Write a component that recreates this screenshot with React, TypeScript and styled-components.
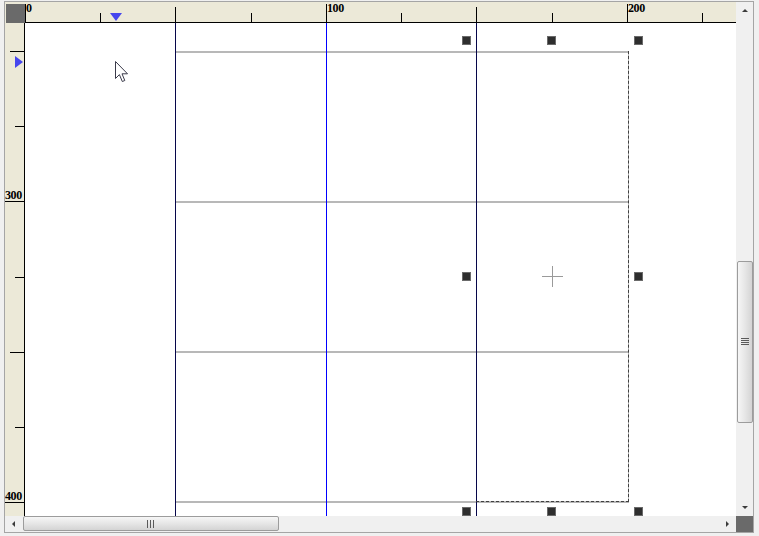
import React from "react";
import styled, { createGlobalStyle } from "styled-components";

type TickKind = "label" | "mid" | "minor";

interface Tick {
  at: number;
  kind: TickKind;
  label?: string;
}

const topTicks: Tick[] = [
  { at: 0, kind: "label", label: "0" },
  { at: 75, kind: "minor" },
  { at: 150, kind: "mid" },
  { at: 226, kind: "minor" },
  { at: 301, kind: "label", label: "100" },
  { at: 376, kind: "minor" },
  { at: 451, kind: "mid" },
  { at: 527, kind: "minor" },
  { at: 602, kind: "label", label: "200" },
  { at: 677, kind: "minor" },
];

const sideTicks: Tick[] = [
  { at: 28, kind: "mid" },
  { at: 103, kind: "minor" },
  { at: 178, kind: "label", label: "300" },
  { at: 254, kind: "minor" },
  { at: 329, kind: "mid" },
  { at: 404, kind: "minor" },
  { at: 479, kind: "label", label: "400" },
];

const guides = [
  { at: 150, color: "#06064a" },
  { at: 301, color: "#0000ff" },
  { at: 451, color: "#06064a" },
];

const handles = [
  [437, 13],
  [522, 13],
  [609, 13],
  [437, 249],
  [609, 249],
  [437, 484],
  [522, 484],
  [609, 484],
];

const scroll = {
  v: { offset: 242, size: 162 },
  h: { offset: 1, size: 256 },
};

const topLen: Record<TickKind, number> = { label: 18, mid: 15, minor: 9 };
const sideLen: Record<TickKind, number> = { label: 19, mid: 14, minor: 9 };

const GlobalStyle = createGlobalStyle`
  html, body {
    margin: 0;
    padding: 0;
    background: #f0f0f0;
  }
  body {
    font-family: "Liberation Sans", Arial, sans-serif;
  }
`;

export default function App() {
  return (
    <>
      <GlobalStyle />
      <Frame>
        <Window>
          <Corner>
            <CornerBlock />
          </Corner>

          <TopRuler>
            {topTicks.map((t) => (
              <React.Fragment key={t.at}>
                <TopTick style={{ left: t.at, height: topLen[t.kind] }} />
                {t.label && <TopLabel style={{ left: t.at + 1 }}>{t.label}</TopLabel>}
              </React.Fragment>
            ))}
            <DownMarker />
          </TopRuler>

          <SideRuler>
            {sideTicks.map((t) => (
              <React.Fragment key={t.at}>
                <SideTick style={{ top: t.at, width: sideLen[t.kind] }} />
                {t.label && <SideLabel style={{ top: t.at - 12 }}>{t.label}</SideLabel>}
              </React.Fragment>
            ))}
            <RightMarker />
          </SideRuler>

          <Canvas>
            <TableGrid>
              {Array.from({ length: 9 }).map((_, i) => (
                <TableCell key={i} />
              ))}
            </TableGrid>
            {guides.map((g) => (
              <Guide key={g.at} $color={g.color} style={{ left: g.at }} />
            ))}
            <Selection />
            {handles.map(([x, y]) => (
              <Handle key={`${x}-${y}`} style={{ left: x, top: y }} />
            ))}
            <Cross width="21" height="21" viewBox="0 0 21 21">
              <line x1="0" y1="10.5" x2="21" y2="10.5" stroke="#9a9a9a" strokeWidth="1" />
              <line x1="10.5" y1="0" x2="10.5" y2="21" stroke="#9a9a9a" strokeWidth="1" />
            </Cross>
            <Pointer width="14" height="22" viewBox="0 0 14 22">
              <path
                d="M0.5 0.5 L0.5 17.5 L4.4 13.6 L7.3 20.5 L9.8 19.5 L7 12.8 L12.5 12.8 Z"
                fill="#ffffff"
                stroke="#3a3a4a"
                strokeWidth="1"
                strokeLinejoin="miter"
              />
            </Pointer>
          </Canvas>

          <VScroll>
            <ScrollButton>
              <Arrow $dir="up" />
            </ScrollButton>
            <Track>
              <Thumb $vertical style={{ marginTop: scroll.v.offset, height: scroll.v.size }}>
                <Grip $vertical />
              </Thumb>
            </Track>
            <ScrollButton>
              <Arrow $dir="down" />
            </ScrollButton>
          </VScroll>

          <HScroll>
            <ScrollButton>
              <Arrow $dir="left" />
            </ScrollButton>
            <Track $horizontal>
              <Thumb style={{ marginLeft: scroll.h.offset, width: scroll.h.size }}>
                <Grip />
              </Thumb>
            </Track>
            <ScrollButton>
              <Arrow $dir="right" />
            </ScrollButton>
          </HScroll>

          <SizeBox />
        </Window>
      </Frame>
    </>
  );
}

const Frame = styled.div`
  width: 759px;
  height: 536px;
  box-sizing: border-box;
  padding: 1px 5px 3px 4px;
  background: #f0f0f0;
`;

const Window = styled.div`
  height: 100%;
  box-sizing: border-box;
  border: 1px solid #a5a5a5;
  display: grid;
  grid-template-columns: 20px 1fr 17px;
  grid-template-rows: 21px 1fr 16px;
  grid-template-areas:
    "corner top vscroll"
    "side canvas vscroll"
    "hscroll hscroll box";
`;

const Corner = styled.div`
  grid-area: corner;
  background: #ece9d8;
  box-sizing: border-box;
  padding: 2px 0 0 1px;
`;

const CornerBlock = styled.div`
  width: 100%;
  height: 100%;
  background: #6a6a6a;
`;

const RulerBase = styled.div`
  position: relative;
  overflow: hidden;
  background: #ece9d8;
  font-family: "Liberation Serif", "Times New Roman", serif;
  font-weight: bold;
  font-size: 12px;
  line-height: 12px;
  color: #000;
`;

const TopRuler = styled(RulerBase)`
  grid-area: top;
  border-bottom: 1px solid #000;
`;

const SideRuler = styled(RulerBase)`
  grid-area: side;
  border-right: 1px solid #000;
`;

const TopTick = styled.span`
  position: absolute;
  bottom: 0;
  width: 1px;
  background: #000;
`;

const SideTick = styled.span`
  position: absolute;
  right: 0;
  height: 1px;
  background: #000;
`;

const TopLabel = styled.span`
  position: absolute;
  top: 0;
  letter-spacing: -0.4px;
`;

const SideLabel = styled.span`
  position: absolute;
  left: 0;
  letter-spacing: -0.4px;
  white-space: nowrap;
`;

const DownMarker = styled.span`
  position: absolute;
  left: 85px;
  top: 11px;
  width: 0;
  height: 0;
  border-left: 6px solid transparent;
  border-right: 6px solid transparent;
  border-top: 8px solid #4646ee;
`;

const RightMarker = styled.span`
  position: absolute;
  left: 10px;
  top: 33px;
  width: 0;
  height: 0;
  border-top: 6px solid transparent;
  border-bottom: 6px solid transparent;
  border-left: 8px solid #4646ee;
`;

const Canvas = styled.div`
  grid-area: canvas;
  position: relative;
  overflow: hidden;
  background: #fff;
`;

const TableGrid = styled.div`
  position: absolute;
  left: 151px;
  top: 28px;
  display: grid;
  grid-template-columns: 150px 150px 152px;
  grid-template-rows: repeat(3, 150px);
  border-top: 2px solid #b8b8b8;
  border-right: 1px solid #b8b8b8;
`;

const TableCell = styled.div`
  box-sizing: border-box;
  border-bottom: 2px solid #b8b8b8;
`;

const Guide = styled.div<{ $color: string }>`
  position: absolute;
  top: 0;
  bottom: 0;
  width: 1px;
  background: ${(p) => p.$color};
`;

const Selection = styled.div`
  position: absolute;
  left: 451px;
  top: 28px;
  width: 153px;
  height: 451px;
  box-sizing: border-box;
  border-right: 1px dashed #404040;
  border-bottom: 1px dashed #404040;
`;

const Handle = styled.span`
  position: absolute;
  width: 9px;
  height: 9px;
  box-sizing: border-box;
  background: #2e2e2e;
  border: 1px solid #6a6a6a;
`;

const Cross = styled.svg`
  position: absolute;
  left: 517px;
  top: 243px;
`;

const Pointer = styled.svg`
  position: absolute;
  left: 90px;
  top: 38px;
`;

const VScroll = styled.div`
  grid-area: vscroll;
  display: grid;
  grid-template-rows: 17px 1fr 17px;
  background: #f0f0f0;
`;

const HScroll = styled.div`
  grid-area: hscroll;
  display: grid;
  grid-template-columns: 17px 1fr 17px;
  background: #f0f0f0;
`;

const ScrollButton = styled.div`
  display: flex;
  align-items: center;
  justify-content: center;
`;

const Arrow = styled.span<{ $dir: "up" | "down" | "left" | "right" }>`
  width: 0;
  height: 0;
  ${(p) =>
    p.$dir === "up"
      ? "border-left: 3px solid transparent; border-right: 3px solid transparent; border-bottom: 3px solid #3c3c3c;"
      : p.$dir === "down"
      ? "border-left: 3px solid transparent; border-right: 3px solid transparent; border-top: 3px solid #3c3c3c;"
      : p.$dir === "left"
      ? "border-top: 3px solid transparent; border-bottom: 3px solid transparent; border-right: 3px solid #3c3c3c;"
      : "border-top: 3px solid transparent; border-bottom: 3px solid transparent; border-left: 3px solid #3c3c3c;"}
`;

const Track = styled.div<{ $horizontal?: boolean }>`
  display: flex;
  flex-direction: ${(p) => (p.$horizontal ? "row" : "column")};
  padding-left: ${(p) => (p.$horizontal ? "0" : "1px")};
  overflow: hidden;
`;

const Thumb = styled.div<{ $vertical?: boolean }>`
  box-sizing: border-box;
  flex: none;
  display: flex;
  align-items: center;
  justify-content: center;
  border: 1px solid #9c9c9c;
  border-radius: 2px;
  background: ${(p) =>
    p.$vertical
      ? "linear-gradient(to right, #f6f6f6, #e6e6e6 50%, #d4d4d4)"
      : "linear-gradient(to bottom, #f6f6f6, #e6e6e6 50%, #d4d4d4)"};
  ${(p) => (p.$vertical ? "width: 16px;" : "height: 15px;")}
`;

const Grip = styled.span<{ $vertical?: boolean }>`
  width: 8px;
  height: 8px;
  background: ${(p) =>
    p.$vertical
      ? "repeating-linear-gradient(to bottom, #5a5a5a 0 1px, transparent 1px 2px)"
      : "repeating-linear-gradient(to right, #5a5a5a 0 1px, transparent 1px 3px)"};
`;

const SizeBox = styled.div`
  grid-area: box;
  background: #6a6a6a;
`;
